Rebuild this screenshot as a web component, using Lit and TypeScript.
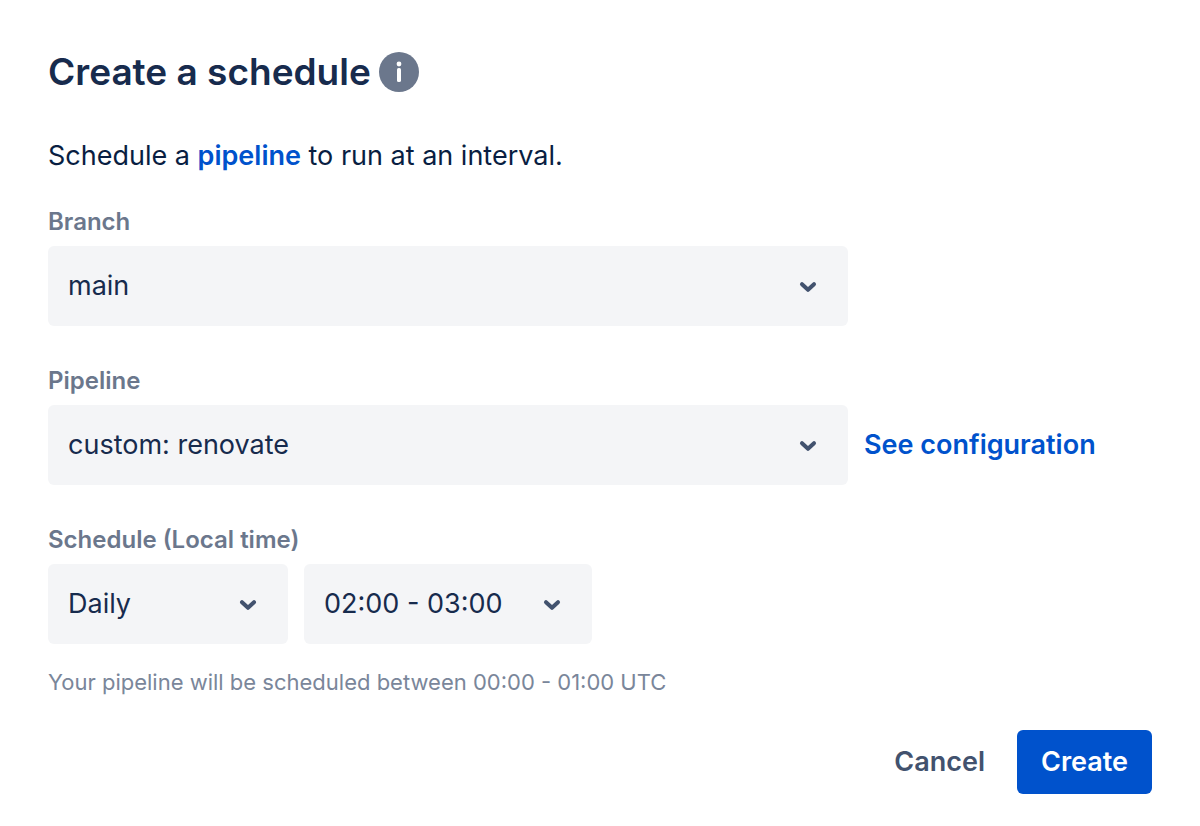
import { LitElement, html, css } from "lit";
import { customElement } from "lit/decorators.js";

const chevron = html`<svg class="chevron" viewBox="0 0 48 48" aria-hidden="true">
  <path d="M18 22.2 L24 27.8 L30 22.2" fill="none" stroke="currentColor" stroke-width="4" stroke-linecap="round" stroke-linejoin="round" />
</svg>`;

@customElement("app-root")
export class AppRoot extends LitElement {
  static styles = css`
    :host {
      display: block;
      background: #fff;
      color: #172b4d;
      font-family: Inter, "Liberation Sans", sans-serif;
      font-size: 27px;
      line-height: 40px;
    }
    * { box-sizing: border-box; }
    .dialog { padding: 48px 48px 32px; }
    .header { display: flex; align-items: center; gap: 8px; }
    h1 { margin: 0; font-size: 37px; line-height: 48px; font-weight: 600; }
    .info { display: block; width: 40px; height: 40px; }
    .intro { margin: 40px 0 0; color: #091e42; }
    a { color: #0052cc; font-weight: 600; text-decoration: none; }
    .field { margin-top: 39px; }
    .intro + .field { margin-top: 30px; }
    .label { display: block; padding: 0; color: #6b778c; font-size: 24px; line-height: 32px; font-weight: 600; margin-bottom: 8px; }
    .row { display: flex; align-items: center; gap: 16px; }
    .control { position: relative; flex: 0 1 800px; color: #42526e; }
    .control.day { flex-basis: 240px; }
    .control.hour { flex-basis: 288px; }
    select { appearance: none; display: block; width: 100%; height: 80px; margin: 0; padding: 0 80px 0 20px; border: 0; border-radius: 6px; background: #f4f5f7; color: #172b4d; font: inherit; }
    .chevron { position: absolute; right: 16px; top: 16px; width: 48px; height: 48px; pointer-events: none; }
    .help { margin: 22px 0 0; color: #7a869a; font-size: 22px; line-height: 32px; }
    .footer { display: flex; justify-content: flex-end; gap: 8px; margin-top: 32px; }
    button { height: 64px; padding: 0 24px; border: 0; border-radius: 6px; background: none; color: #42526e; font: inherit; font-weight: 600; }
    .primary { background: #0052cc; color: #fff; }
  `;

  render() {
    return html`<form class="dialog" @submit=${(e: Event) => e.preventDefault()}>
      <div class="header">
        <h1>Create a schedule</h1>
        <svg class="info" viewBox="0 0 40 40" role="img" aria-label="Information">
          <circle cx="20" cy="20" r="20" fill="#6b778c" />
          <circle cx="20" cy="12" r="2.4" fill="#fff" />
          <rect x="18" y="16" width="4" height="14" rx="1.6" fill="#fff" />
        </svg>
      </div>
      <p class="intro">Schedule a <a href="#pipeline">pipeline</a> to run at an interval.</p>
      <div class="field">
        <label class="label" for="branch">Branch</label>
        <div class="row">
          <div class="control"><select id="branch"><option>main</option></select>${chevron}</div>
        </div>
      </div>
      <div class="field">
        <label class="label" for="pipeline">Pipeline</label>
        <div class="row">
          <div class="control"><select id="pipeline"><option>custom: renovate</option></select>${chevron}</div>
          <a href="#configuration">See configuration</a>
        </div>
      </div>
      <div class="field">
        <label class="label" for="day">Schedule (Local time)</label>
        <div class="row">
          <div class="control day"><select id="day"><option>Daily</option></select>${chevron}</div>
          <div class="control hour"><select aria-label="Hour"><option>02:00 - 03:00</option></select>${chevron}</div>
        </div>
      </div>
      <p class="help">Your pipeline will be scheduled between 00:00 - 01:00 UTC</p>
      <div class="footer">
        <button type="button">Cancel</button>
        <button type="submit" class="primary">Create</button>
      </div>
    </form>`;
  }
}
